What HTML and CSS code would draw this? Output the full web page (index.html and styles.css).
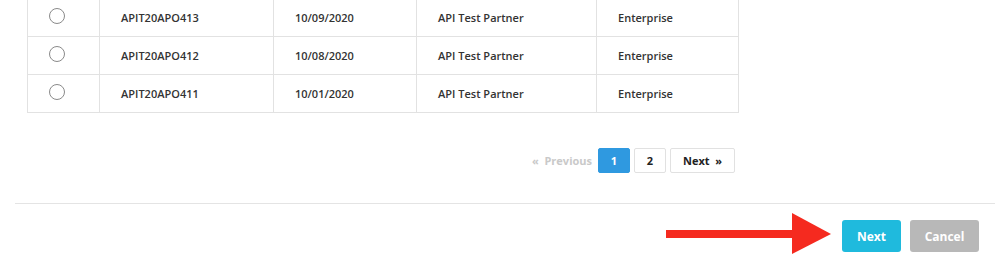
FILE: index.html
```html
<!DOCTYPE html>
<html lang="en">
<head>
    <meta charset="UTF-8">
    <meta name="viewport" content="width=device-width, initial-scale=1.0">
    <title>Select Application</title>
    <link rel="stylesheet" href="styles.css">
</head>
<body>
    <div class="page">
        <div class="list-wrap">
            <table class="app-table">
                <tr>
                    <td class="pick"><span class="radio"></span></td>
                    <td class="c-id">APIT20APO413</td>
                    <td class="c-date">10/09/2020</td>
                    <td class="c-partner">API Test Partner</td>
                    <td class="c-plan">Enterprise</td>
                </tr>
                <tr>
                    <td class="pick"><span class="radio"></span></td>
                    <td class="c-id">APIT20APO412</td>
                    <td class="c-date">10/08/2020</td>
                    <td class="c-partner">API Test Partner</td>
                    <td class="c-plan">Enterprise</td>
                </tr>
                <tr>
                    <td class="pick"><span class="radio"></span></td>
                    <td class="c-id">APIT20APO411</td>
                    <td class="c-date">10/01/2020</td>
                    <td class="c-partner">API Test Partner</td>
                    <td class="c-plan">Enterprise</td>
                </tr>
            </table>

            <div class="pager">
                <span class="pager-prev">&laquo;&nbsp;&nbsp;Previous</span>
                <a class="pager-btn active">1</a>
                <a class="pager-btn">2</a>
                <a class="pager-btn pager-next">Next&nbsp;&nbsp;&raquo;</a>
            </div>
        </div>

        <div class="footer">
            <svg class="arrow" width="165" height="42" viewBox="0 0 165 42">
                <rect x="0" y="17" width="130" height="8" fill="#f52a1f"/>
                <polygon points="126,0 165,21 126,41" fill="#f52a1f"/>
            </svg>
            <button class="btn btn-next" type="button">Next</button>
            <button class="btn btn-cancel" type="button">Cancel</button>
        </div>
    </div>
</body>
</html>
```

FILE: styles.css
```css
/* Basic Reset */
* {
    margin: 0;
    padding: 0;
    box-sizing: border-box;
    font-family: "Open Sans", Arial, sans-serif;
}

body {
    background-color: #fff;
    color: #333;
}

/* Page */
.page {
    padding: 0 3px 0 15px;
}

.list-wrap {
    width: 724px;
    padding-left: 12px;
    margin-top: -2px;
}

/* Table */
.app-table {
    width: 712px;
    border-collapse: collapse;
    border: 1px solid #e2e2e2;
}

.app-table td {
    height: 38px;
    border: 1px solid #e2e2e2;
    font-size: 11px;
    font-weight: 600;
    color: #333;
    padding: 0 21px;
    white-space: nowrap;
}

.app-table .pick {
    width: 72px;
    padding: 0 0 0 21px;
}

.app-table .c-id { width: 174px; }
.app-table .c-date { width: 143px; }
.app-table .c-partner { width: 180px; }

.radio {
    display: inline-block;
    width: 16px;
    height: 16px;
    border: 1px solid #8a8a8a;
    border-radius: 50%;
    vertical-align: middle;
    margin-top: -6px;
}

/* Pagination */
.pager {
    display: flex;
    justify-content: flex-end;
    align-items: center;
    gap: 4px;
    margin-top: 35px;
    padding-right: 4px;
}

.pager-prev {
    font-size: 11px;
    font-weight: 700;
    color: #c9c9c9;
    margin-right: 2px;
}

.pager-btn {
    display: inline-flex;
    align-items: center;
    justify-content: center;
    min-width: 32px;
    height: 25px;
    border: 1px solid #e1e1e1;
    border-radius: 2px;
    font-size: 11px;
    font-weight: 700;
    color: #222;
}

.pager-btn.active {
    background-color: #2f99e0;
    border-color: #2f99e0;
    color: #fff;
}

.pager-next {
    width: 65px;
}

/* Footer */
.footer {
    margin-top: 30px;
    border-top: 1px solid #e4e4e4;
    display: flex;
    justify-content: flex-end;
    align-items: flex-start;
    padding: 16px 16px 0 0;
}

.arrow {
    display: block;
    margin: -7px 11px 0 0;
}

.btn {
    height: 32px;
    border: none;
    border-radius: 3px;
    font-size: 12px;
    font-weight: 700;
    color: #fff;
    cursor: pointer;
}

.btn-next {
    width: 59px;
    background-color: #1fbadd;
}

.btn-cancel {
    width: 69px;
    margin-left: 9px;
    background-color: #b8b8b8;
}
```
